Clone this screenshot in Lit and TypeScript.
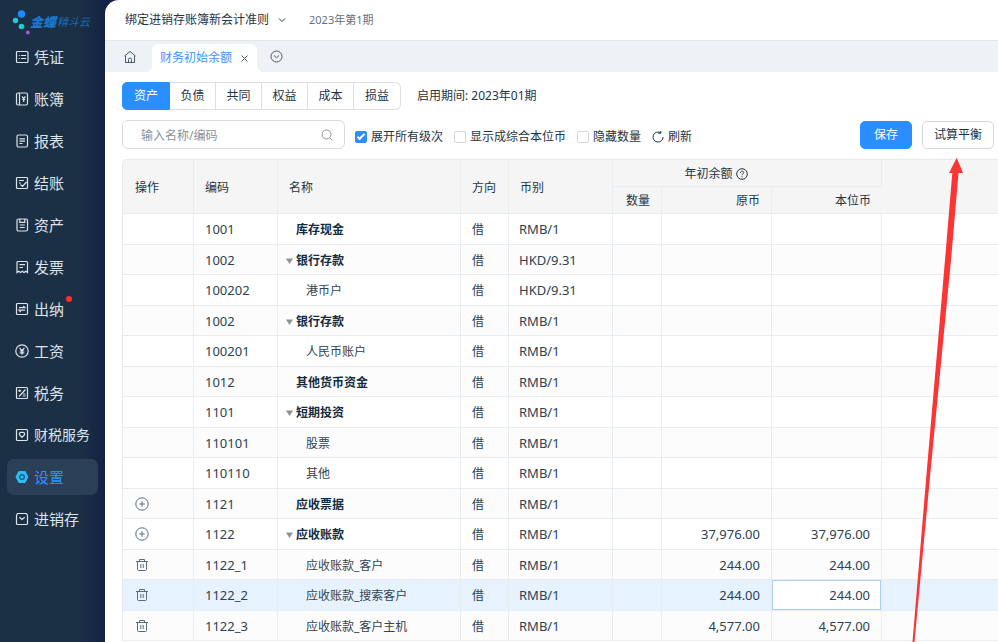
import { LitElement, html, svg, css, nothing } from "lit";
import { customElement, state } from "lit/decorators.js";
import { classMap } from "lit/directives/class-map.js";

interface NavItem { id: string; label: string; dot?: boolean; long?: boolean }
interface Row {
  code: string; name: string; cur: string; level: number;
  open?: boolean; op?: "add" | "del"; amount?: string; active?: boolean;
}

const NAV: NavItem[] = [
  { id: "voucher", label: "凭证" },
  { id: "ledger", label: "账簿" },
  { id: "report", label: "报表" },
  { id: "closing", label: "结账" },
  { id: "asset", label: "资产" },
  { id: "invoice", label: "发票" },
  { id: "cashier", label: "出纳", dot: true },
  { id: "salary", label: "工资" },
  { id: "tax", label: "税务" },
  { id: "service", label: "财税服务", long: true },
  { id: "settings", label: "设置" },
  { id: "stock", label: "进销存" },
];

const ICONS: Record<string, unknown> = {
  voucher: svg`<rect x="1.500" y="1.500" width="11.500" height="11" rx="1"/><path d="M3.800 5.500h1M6 5.500h5M3.800 8.500h1M6 8.500h5"/>`,
  ledger: svg`<rect x="1.500" y="1" width="11" height="12" rx="1.500"/><path d="M4.500 1v12M7 4.500l1.700 2 1.700-2M8.700 6.500v3.500M7.200 7.500h3"/>`,
  report: svg`<rect x="2" y="1" width="10.500" height="12" rx="1.500"/><path d="M4.500 4.800h5.500M4.500 7.200h5.500M4.500 9.500h3"/>`,
  closing: svg`<path d="M12.500 6V2.500a1 1 0 0 0-1-1h-9a1 1 0 0 0-1 1v9a1 1 0 0 0 1 1h9a1 1 0 0 0 1-1V6M4 4.500h5M4 7h2M5.500 8.500l2 2 4-4.500"/>`,
  asset: svg`<rect x="2" y="1" width="10.500" height="12" rx="1.500"/><path d="M4.800 1v3.300h5V1M4.800 7h5M4.800 9.500h5"/>`,
  invoice: svg`<path d="M2 12.500v-10a1 1 0 0 1 1-1h8.500a1 1 0 0 1 1 1v10l-1.800-1.300-1.700 1.300-1.700-1.300-1.800 1.300-1.700-1.300zM4.500 4.700h5.500M4.500 7.500h3.500"/>`,
  cashier: svg`<rect x="1.500" y="1.500" width="11" height="11" rx="1"/><path d="M4 5.700h6l-1.800-1.900M10 8.200H4l1.800 1.900"/>`,
  salary: svg`<circle cx="7" cy="7" r="6.200"/><path d="M4.600 3.800L7 6.700l2.400-2.900M7 6.700v4M4.700 7h4.600M4.700 8.900h4.600"/>`,
  tax: svg`<rect x="1.500" y="1.500" width="11" height="11" rx="1"/><path d="M10.500 3.500l-6.500 7M3.300 4.700h2.800M4.700 3.400v2.600M7.700 10h3M8 8h2.500"/>`,
  service: svg`<rect x="1.500" y="1.500" width="11" height="11" rx="1"/><path d="M4.500 5.200l1-.8h3l1 .8v1.500L7 9.300 4.500 6.700z"/>`,
  stock: svg`<path d="M2.500 1.500h9l1 2v8a1 1 0 0 1-1 1h-9a1 1 0 0 1-1-1v-8zM4.300 5.300L7 7.500l2.700-2.200"/>`,
  settings: svg`<path class="hex" d="M4.200 1h5.600a1 1 0 0 1 .8.500l2.600 4.700a1.500 1.500 0 0 1 0 1.400l-2.600 4.800a1 1 0 0 1-.8.500H4.200a1 1 0 0 1-.8-.5L.8 7.600a1.500 1.500 0 0 1 0-1.400l2.600-4.700a1 1 0 0 1 .8-.5z"/><circle class="hole" cx="7" cy="7" r="2.300"/>`,
};

const ROWS: Row[] = [
  { code: "1001", name: "库存现金", cur: "RMB/1", level: 0 },
  { code: "1002", name: "银行存款", cur: "HKD/9.31", level: 0, open: true },
  { code: "100202", name: "港币户", cur: "HKD/9.31", level: 1 },
  { code: "1002", name: "银行存款", cur: "RMB/1", level: 0, open: true },
  { code: "100201", name: "人民币账户", cur: "RMB/1", level: 1 },
  { code: "1012", name: "其他货币资金", cur: "RMB/1", level: 0 },
  { code: "1101", name: "短期投资", cur: "RMB/1", level: 0, open: true },
  { code: "110101", name: "股票", cur: "RMB/1", level: 1 },
  { code: "110110", name: "其他", cur: "RMB/1", level: 1 },
  { code: "1121", name: "应收票据", cur: "RMB/1", level: 0, op: "add" },
  { code: "1122", name: "应收账款", cur: "RMB/1", level: 0, open: true, op: "add", amount: "37,976.00" },
  { code: "1122_1", name: "应收账款_客户", cur: "RMB/1", level: 1, op: "del", amount: "244.00" },
  { code: "1122_2", name: "应收账款_搜索客户", cur: "RMB/1", level: 1, op: "del", amount: "244.00", active: true },
  { code: "1122_3", name: "应收账款_客户主机", cur: "RMB/1", level: 1, op: "del", amount: "4,577.00" },
];

const base = css`
  *, *::before, *::after { box-sizing: border-box; }
  button, input { font: inherit; color: inherit; }
  button { padding: 0; border: 0; background: none; cursor: pointer; }
  svg { display: block; fill: none; stroke: currentColor; }
  a { color: inherit; text-decoration: none; }
`;

@customElement("side-nav")
class SideNav extends LitElement {
  @state() active = "settings";

  static styles = [base, css`
    :host { display: block; background: linear-gradient(90deg, #1b2f45 0, #1b2f45 76%, #142344 100%); color: #dfe4ea; }
    .logo { display: flex; align-items: center; height: 39px; padding: 4px 0 0 12px; font-style: italic; white-space: nowrap; color: #1878d4; }
    .logo svg { stroke: none; }
    .brand { font-size: 13px; font-weight: 900; }
    .sub { font-size: 11px; margin-left: 1px; color: #1b6cb8; }
    nav { display: flex; flex-direction: column; gap: 6px; padding: 0 7px; }
    .item { display: flex; align-items: center; gap: 5px; height: 36px; padding-left: 8px; border-radius: 7px; font-size: 15px; line-height: 20px; white-space: nowrap; }
    .item.long { font-size: 14px; }
    .item.active { background: #2b3f57; color: #2f92ff; }
    .label { position: relative; }
    .dot::after { content: ""; position: absolute; right: -8px; top: -3px; width: 6px; height: 6px; border-radius: 50%; background: #f9302f; }
    .hex { fill: #2bbcf2; stroke: none; }
    .hole { fill: #2bbcf2; stroke: #1f5f93; stroke-width: 1.5; }
  `];

  render() {
    return html`
      <div class="logo">
        <svg width="18" height="26" viewBox="0 0 18 26" aria-hidden="true">
          <circle cx="9.500" cy="5" r="3.700" fill="#1b8cff"/>
          <circle cx="3.500" cy="11.500" r="2.700" fill="#19cfe8"/>
          <circle cx="9.500" cy="17.500" r="2.800" fill="#19cfc8"/>
          <circle cx="15.800" cy="23.500" r="1.900" fill="#9a62d8"/>
        </svg>
        <span class="brand">金蝶</span><span class="sub">精斗云</span>
      </div>
      <nav aria-label="主菜单">
        ${NAV.map((n) => html`
          <a href="#${n.id}" class=${classMap({ item: true, active: n.id === this.active, long: !!n.long })}
            @click=${() => { this.active = n.id; }}>
            <svg width="14" height="14" viewBox="0 0 14 14" stroke-width="1.200" aria-hidden="true">${ICONS[n.id]}</svg>
            <span class=${classMap({ label: true, dot: !!n.dot })}>${n.label}</span>
          </a>`)}
      </nav>`;
  }
}

@customElement("balance-table")
class BalanceTable extends LitElement {
  static styles = [base, css`
    :host { display: block; border: solid #e4e9ee; border-width: 1px 0 0 1px; border-radius: 5px 0 0 0; overflow: hidden; }
    table { width: 100%; table-layout: fixed; border-collapse: separate; border-spacing: 0; font-size: 12px; line-height: 18px; }
    .w-op { width: 71px; } .w-code { width: 84px; } .w-name { width: 183px; } .w-dir { width: 48px; }
    .w-cur { width: 104px; } .w-qty { width: 49px; } .w-amt { width: 110px; }
    th, td { padding: 2px 11px 0 11px; border: solid #e8edf1; border-width: 0 1px 1px 0; text-align: left; font-weight: 400; white-space: nowrap; }
    th:last-child, td:last-child { border-right: 0; }
    th { height: 27px; background: #f5f5f6; }
    thead .first { padding-left: 12px; }
    .num { text-align: right; }
    .group { padding-right: 73px; text-align: center; }
    .group-in { display: inline-flex; align-items: center; gap: 3px; vertical-align: top; }
    td { height: 30px; color: #2c4252; }
    tbody tr:nth-child(odd) td { height: 31px; }
    tbody tr:nth-child(even) td { background: #fcfcfc; }
    tbody tr.active td { background: #e6f3ff; }
    td.latin { padding-top: 0; padding-left: 10px; font-size: 13px; }
    td.code { padding-left: 11px; }
    .name { display: flex; align-items: center; padding-left: 7px; color: #33434f; }
    .name.child { padding-left: 17px; }
    .name.top { font-weight: 700; color: #132c3f; }
    .fold { width: 7px; height: 12px; margin: 0 3px 0 -10px; color: #8f9396; }
    .fold svg { stroke: none; fill: currentColor; }
    td.ops { padding-top: 0; }
    .op { display: block; width: 16px; height: 16px; color: #5b6c78; }
    tbody tr.active td.edit { padding: 0; background: #fff; }
    .edit input { display: block; width: 100%; height: 30px; border: 1px solid #add0f2; outline: 0; background: #fff; padding: 0 10px; text-align: right; font-size: 13px; }
  `];

  private op(kind: "add" | "del") {
    return kind === "add"
      ? html`<button class="op" aria-label="新增"><svg width="16" height="16" viewBox="0 0 16 16"><circle cx="8" cy="8" r="6.200"/><path d="M5.200 8h5.600M8 5.200v5.600"/></svg></button>`
      : html`<button class="op" aria-label="删除"><svg width="16" height="16" viewBox="0 0 16 16"><path d="M2 4.500h12M5.500 4.500V2.500h5v2M3.500 4.500v8a1 1 0 0 0 1 1h7a1 1 0 0 0 1-1v-8M6.800 7v4M9.200 7v4"/></svg></button>`;
  }

  render() {
    return html`
      <table>
        <colgroup>
          <col class="w-op"><col class="w-code"><col class="w-name"><col class="w-dir"><col class="w-cur">
          <col class="w-qty"><col class="w-amt"><col class="w-amt"><col>
        </colgroup>
        <thead>
          <tr>
            <th rowspan="2" class="first">操作</th><th rowspan="2">编码</th><th rowspan="2">名称</th>
            <th rowspan="2">方向</th><th rowspan="2">币别</th>
            <th colspan="3" class="group"><span class="group-in">年初余额
              <svg width="12" height="12" viewBox="0 0 12 12" aria-hidden="true"><circle cx="6" cy="6" r="5.300"/><path d="M4.400 4.900c0-2.200 3.300-2.200 3.300-.2 0 1.200-1.700 1.200-1.700 2.500M6 8.300v1"/></svg></span></th>
            <th rowspan="2"></th>
          </tr>
          <tr><th class="num">数量</th><th class="num">原币</th><th>
            <div class="num">本位币</div></th></tr>
        </thead>
        <tbody>
          ${ROWS.map((r) => html`
            <tr class=${classMap({ active: !!r.active })}>
              <td class="ops">${r.op ? this.op(r.op) : nothing}</td>
              <td class="latin code">${r.code}</td>
              <td><div class=${classMap({ name: true, top: r.level === 0, child: r.level > 0 })}>
                ${r.open ? html`<button class="fold" aria-label="收起"><svg width="7" height="12" viewBox="0 0 7 12"><path d="M0 3.500h7L3.500 9z"/></svg></button>` : nothing}${r.name}</div></td>
              <td>借</td>
              <td class="latin">${r.cur}</td>
              <td></td>
              <td class="latin num">${r.amount ?? ""}</td>
              ${r.active
                ? html`<td class="edit"><input type="text" aria-label="本位币" .value=${r.amount ?? ""}></td>`
                : html`<td class="latin num">${r.amount ?? ""}</td>`}
              <td></td>
            </tr>`)}
        </tbody>
      </table>`;
  }
}

@customElement("app-root")
class AppRoot extends LitElement {
  @state() kind = "资产";

  static styles = [base, css`
    :host { display: flex; position: relative; min-height: 100vh; overflow: hidden; background: #142344; color: #1f3442; font: 12px/18px "Noto Sans", "Noto Sans CJK SC", sans-serif; }
    side-nav { flex: 0 0 105px; }
    main { flex: 1; min-width: 0; background: #fff; border-top-left-radius: 14px; overflow: hidden; }
    header { display: flex; align-items: center; height: 41px; padding: 0 20px; border-bottom: 1px solid #e2e6ea; }
    .book { display: flex; align-items: center; gap: 9px; }
    .period { margin-left: 23px; font-size: 11px; color: #68707a; }
    .tabs { display: flex; align-items: center; height: 31px; padding-left: 18px; background: #eef1f5; color: #4d5a66; }
    .tab { position: relative; display: flex; align-items: center; align-self: flex-end; gap: 8px; height: 28px; margin: 0 13px 0 15px; padding: 0 8px; border-radius: 6px 6px 0 0; background: #fff; }
    .tab::before, .tab::after { content: ""; position: absolute; bottom: 0; width: 6px; height: 6px; }
    .tab::before { left: -6px; background: radial-gradient(circle at 0 0, transparent 6px, #fff 6px); }
    .tab::after { right: -6px; background: radial-gradient(circle at 100% 0, transparent 6px, #fff 6px); }
    .tab-name { color: #3b95ff; }
    .content { padding: 10px 0 0 17px; }
    .kinds { display: flex; align-items: center; gap: 16px; }
    .seg { display: flex; }
    .seg button { width: 46px; height: 28px; border: solid #dcdee1; border-width: 1px 1px 1px 0; }
    .seg button:first-child { width: 48px; border-left-width: 1px; border-radius: 5px 0 0 5px; }
    .seg button:last-child { width: 47px; border-radius: 0 6px 6px 0; }
    .seg button.on { background: #2b8eff; border-color: #2b8eff; color: #fff; }
    .tools { display: flex; align-items: center; height: 29px; margin: 10px 0; padding-right: 4px; white-space: nowrap; }
    .search { display: flex; align-items: center; width: 223px; height: 29px; padding: 0 11px 0 18px; border: 1px solid #d9dbde; border-radius: 6px; color: #8e959c; }
    .search input { flex: 1; min-width: 0; border: 0; outline: 0; padding: 2px 0 0; background: none; }
    .search input::placeholder { color: #8a9299; opacity: 1; }
    .opts { display: flex; align-items: center; gap: 11px; padding: 5px 0 0 10px; }
    .opt { display: flex; align-items: center; gap: 4px; }
    .opt input { appearance: none; position: relative; width: 12px; height: 12px; margin: 0; border: 1px solid #d4d7da; border-radius: 2px; background: #fff; }
    .opt input:checked { background: #2b8eff; border-color: #2b8eff; }
    .opt input:checked::after { content: ""; position: absolute; left: 3px; top: 0; width: 4px; height: 8px; border: solid #fff; border-width: 0 2px 2px 0; transform: rotate(45deg); }
    .actions { display: flex; gap: 10px; margin-left: auto; }
    .btn { height: 28px; padding: 0 11px; border: 1px solid #d5d8db; border-radius: 5px; background: #fff; }
    .btn.primary { padding: 0 13px; border-color: #2b8eff; background: #2b8eff; color: #fff; }
    .arrow { position: absolute; right: 30px; top: 157px; stroke: none; fill: #fb3434; pointer-events: none; }
  `];

  render() {
    return html`
      <side-nav></side-nav>
      <main>
        <header>
          <button class="book">绑定进销存账簿新会计准则
            <svg width="8" height="8" viewBox="0 0 8 8" aria-hidden="true"><path d="M1 2.500l3 3 3-3"/></svg></button>
          <span class="period">2023年第1期</span>
        </header>
        <div class="tabs">
          <button aria-label="首页"><svg width="14" height="14" viewBox="0 0 14 14"><path d="M1.500 6L7 1.500 12.500 6M2.500 5.300v7.200h9V5.300M5.500 12.500V9.500a1.500 1.500 0 0 1 3 0v3"/></svg></button>
          <div class="tab"><a class="tab-name" href="#opening">财务初始余额</a>
            <button aria-label="关闭"><svg width="9" height="9" viewBox="0 0 9 9"><path d="M1.500 1.500l6 6M7.500 1.500l-6 6"/></svg></button></div>
          <button aria-label="更多"><svg width="13" height="13" viewBox="0 0 13 13"><circle cx="6.500" cy="6.500" r="5.500"/><path d="M4 5.500l2.500 2.300L9 5.500"/></svg></button>
        </div>
        <div class="content">
          <div class="kinds">
            <div class="seg">
              ${["资产", "负债", "共同", "权益", "成本", "损益"].map((k) => html`<button
                class=${classMap({ on: k === this.kind })} @click=${() => { this.kind = k; }}>${k}</button>`)}
            </div>
            <span>启用期间: 2023年01期</span>
          </div>
          <div class="tools">
            <div class="search">
              <input type="text" aria-label="输入名称/编码" placeholder="输入名称/编码">
              <svg width="12" height="12" viewBox="0 0 12 12" aria-hidden="true"><circle cx="5.500" cy="5.500" r="4.500"/><path d="M8.800 8.800l2.700 2.700"/></svg>
            </div>
            <div class="opts">
              <label class="opt"><input type="checkbox" checked>展开所有级次</label>
              <label class="opt"><input type="checkbox">显示成综合本位币</label>
              <label class="opt"><input type="checkbox">隐藏数量</label>
              <button class="opt"><svg width="12" height="12" viewBox="0 0 12 12" aria-hidden="true"><path d="M8.500 1.700A5 5 0 1 0 11 6M6 2.200H8.800V0"/></svg>刷新</button>
            </div>
            <div class="actions">
              <button class="btn primary">保存</button>
              <button class="btn">试算平衡</button>
            </div>
          </div>
          <balance-table></balance-table>
        </div>
      </main>
      <svg class="arrow" width="60" height="485" viewBox="0 0 60 485" aria-hidden="true">
        <path d="M48.700.7L55 16h-4.500L43 103 21.700 323 6.500 485h-2L18 323 37 103 44.300 16H41z"/>
      </svg>`;
  }
}
